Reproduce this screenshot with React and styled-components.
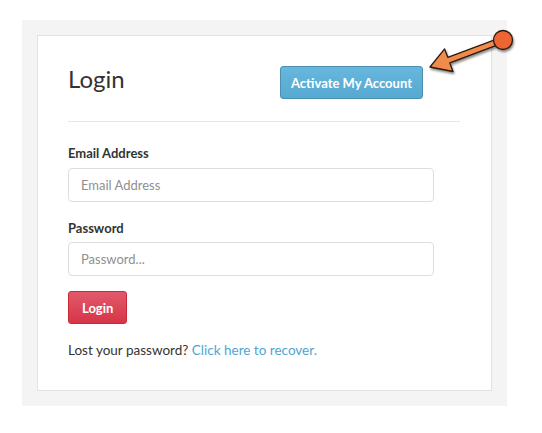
import React from 'react';
import styled, { createGlobalStyle } from 'styled-components';

const GlobalStyle = createGlobalStyle`
  body {
    margin: 0;
    background: #fff;
    font-family: 'Lato', 'Noto Sans', sans-serif;
    color: #333;
  }
`;

const Page = styled.div`
  position: relative;
  width: 542px;
  height: 433px;
  padding: 20px 0 0 22px;
  box-sizing: border-box;
`;

const Frame = styled.div`
  width: 485px;
  height: 386px;
  padding: 15px;
  box-sizing: border-box;
  background: #f4f4f4;
`;

const Card = styled.div`
  height: 100%;
  box-sizing: border-box;
  background: #fff;
  border: 1px solid #e2e2e2;
  padding: 30px 31px 0 30px;
`;

const Header = styled.div`
  display: flex;
  align-items: center;
  justify-content: space-between;
  height: 33px;
  padding: 0 37px 22px 0;
  border-bottom: 1px solid #e6e6e6;
`;

const Title = styled.h1`
  margin: 0;
  font-size: 24px;
  font-weight: 400;
  color: #333;
  position: relative;
  top: -4px;
`;

const Button = styled.button`
  height: 33px;
  padding: 0 ${(p) => p.$pad || 10}px;
  border-radius: 3px;
  font-family: inherit;
  font-size: 13px;
  font-weight: 700;
  color: #fff;
  cursor: pointer;
  border: 1px solid ${(p) => (p.$variant === 'danger' ? '#c92a3a' : '#4a90b5')};
  background: ${(p) =>
    p.$variant === 'danger'
      ? 'linear-gradient(#e2596a, #d63548)'
      : 'linear-gradient(#67b7dd, #56a9d2)'};
`;

const Form = styled.form`
  display: flex;
  flex-direction: column;
  align-items: flex-start;
  padding-top: 22px;
`;

const Label = styled.label`
  font-size: 13px;
  font-weight: 700;
  line-height: 18px;
  margin-bottom: ${(p) => p.$gap || 6}px;
`;

const Input = styled.input`
  width: 366px;
  height: 34px;
  box-sizing: border-box;
  border: 1px solid #dedede;
  border-radius: 4px;
  padding: 0 12px;
  font-family: inherit;
  font-size: 13px;
  color: #333;
  margin-bottom: ${(p) => p.$gap}px;
  &::placeholder {
    color: #8f8f8f;
  }
`;

const Note = styled.p`
  margin: 17px 0 0;
  font-size: 13.5px;
  line-height: 18px;
`;

const Link = styled.a`
  color: #4ea5d2;
  text-decoration: none;
`;

const Overlay = styled.svg`
  position: absolute;
  left: 0;
  top: 0;
  pointer-events: none;
`;

const Arrow = () => (
  <Overlay width="542" height="433" viewBox="0 0 542 433">
    <defs>
      <filter id="sh" x="-20%" y="-20%" width="140%" height="160%">
        <feDropShadow dx="1" dy="2" stdDeviation="1.2" floodColor="#000" floodOpacity="0.45" />
      </filter>
    </defs>
    <g filter="url(#sh)" stroke="#2b1a10" strokeWidth="1.3" strokeLinejoin="round">
      <polygon
        points="430,67 453,71.5 449.8,62.9 503,42.8 502,37.2 447.8,57.3 444.6,48.9"
        fill="#f08b4c"
      />
      <circle cx="503" cy="40" r="9.5" fill="#ec6531" />
    </g>
  </Overlay>
);

const App = () => {
  return (
    <Page>
      <GlobalStyle />
      <Frame>
        <Card>
          <Header>
            <Title>Login</Title>
            <Button type="button">Activate My Account</Button>
          </Header>
          <Form onSubmit={(e) => e.preventDefault()}>
            <Label>Email Address</Label>
            <Input type="email" placeholder="Email Address" $gap={17} />
            <Label $gap={5}>Password</Label>
            <Input type="password" placeholder="Password..." $gap={15} />
            <Button type="submit" $variant="danger" $pad={13}>
              Login
            </Button>
            <Note>
              Lost your password? <Link href="#">Click here to recover.</Link>
            </Note>
          </Form>
        </Card>
      </Frame>
      <Arrow />
    </Page>
  );
};

export default App;
